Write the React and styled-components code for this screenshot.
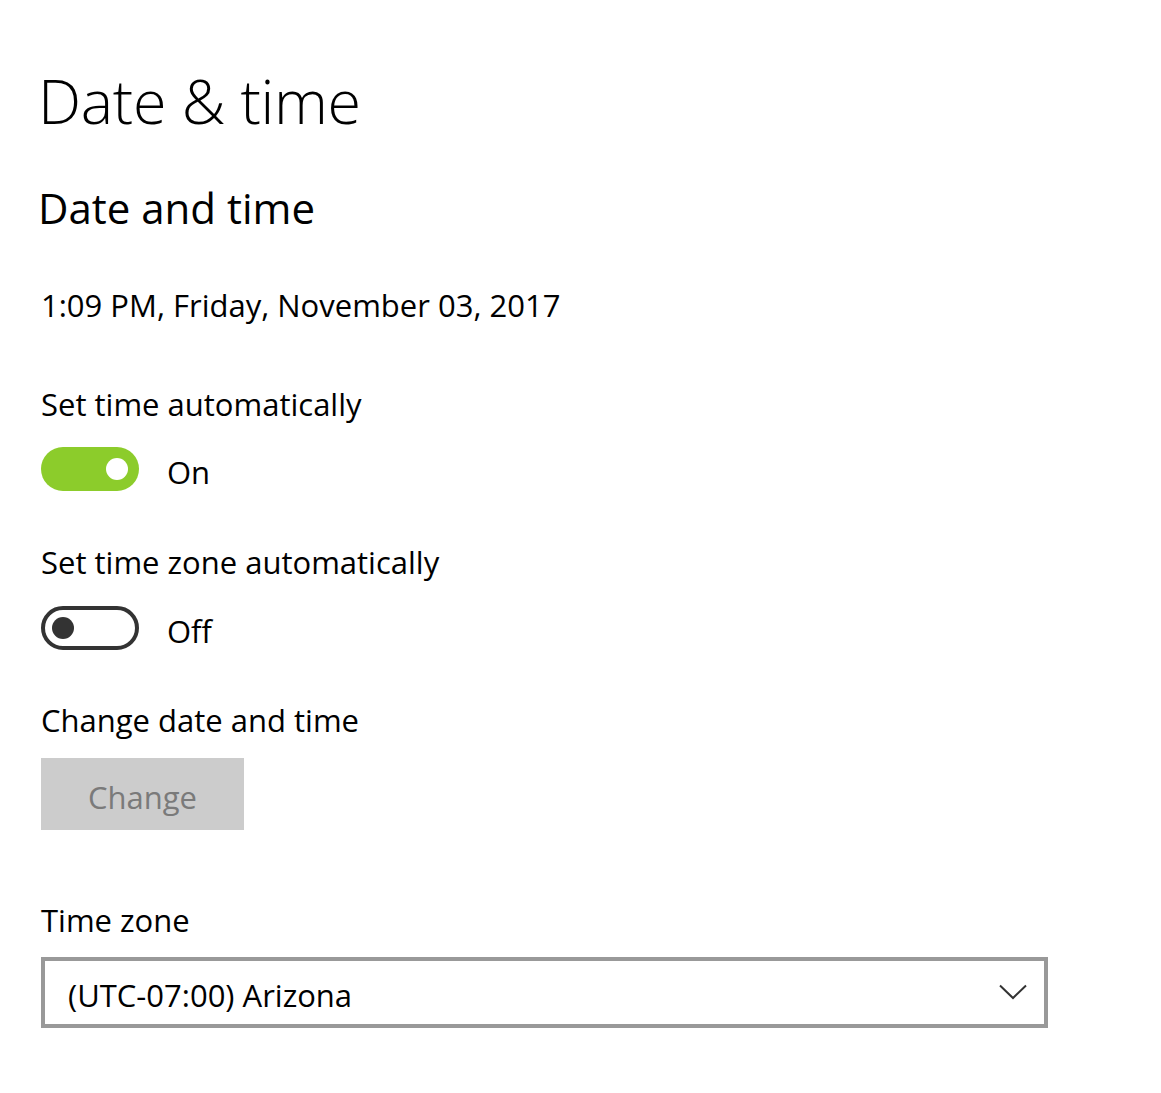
import React from "react";
import styled, { createGlobalStyle } from "styled-components";

const Global = createGlobalStyle`
  html, body { margin: 0; padding: 0; background: #ffffff; }
  body { font-family: "Open Sans", "Noto Sans", sans-serif; color: #000; }
`;

const Page = styled.div`
  width: 1161px;
  min-height: 1093px;
  padding: 61px 0 0 41px;
  box-sizing: border-box;
`;

const Title = styled.h1`
  margin: 0 0 0 -3px;
  font-size: 61px;
  font-weight: 300;
  line-height: 80px;
  letter-spacing: -0.3px;
`;

const SectionTitle = styled.h2`
  margin: 39px 0 0 -3px;
  font-size: 42px;
  font-weight: 400;
  line-height: 56px;
`;

const Text = styled.div`
  margin-top: ${(p) => p.$top || 0}px;
  font-size: 31px;
  line-height: 40px;
  color: ${(p) => p.$color || "#000"};
`;

const ToggleRow = styled.div`
  display: flex;
  align-items: flex-start;
  gap: 28px;
  height: 44px;
  margin-top: ${(p) => p.$top || 0}px;
`;

const Track = styled.div`
  width: 98px;
  height: 44px;
  flex: none;
  box-sizing: border-box;
  border-radius: 22px;
  background: ${(p) => (p.$on ? "#8ccc2b" : "transparent")};
  border: ${(p) => (p.$on ? "none" : "4px solid #333333")};
  display: flex;
  align-items: center;
  justify-content: ${(p) => (p.$on ? "flex-end" : "flex-start")};
  padding: 0 ${(p) => (p.$on ? 11 : 7)}px;
`;

const Knob = styled.div`
  width: 22px;
  height: 22px;
  border-radius: 50%;
  background: ${(p) => (p.$on ? "#ffffff" : "#333333")};
`;

const ToggleLabel = styled.span`
  font-size: 31px;
  line-height: 40px;
  margin-top: 5px;
`;

const Button = styled.button`
  display: block;
  margin-top: 18px;
  width: 203px;
  height: 72px;
  border: none;
  background: #cccccc;
  color: #7a7a7a;
  font-family: inherit;
  font-size: 31px;
  line-height: 40px;
  padding: 6px 0 0;
  cursor: default;
`;

const Select = styled.div`
  margin-top: 17px;
  width: 1007px;
  height: 71px;
  box-sizing: border-box;
  border: 4px solid #999999;
  display: flex;
  align-items: center;
  justify-content: space-between;
  padding: 4px 17px 0 23px;
`;

const SelectText = styled.span`
  font-size: 31px;
  line-height: 40px;
`;

const Chevron = () => (
  <svg width="28" height="16" viewBox="0 0 28 16" style={{ marginTop: -6 }}>
    <path d="M1 1.5 L14 14 L27 1.5" fill="none" stroke="#333" strokeWidth="2" />
  </svg>
);

const Toggle = ({ on }) => (
  <Track $on={on}>
    <Knob $on={on} />
  </Track>
);

export default function App() {
  return (
    <Page>
      <Global />
      <Title>Date &amp; time</Title>
      <SectionTitle>Date and time</SectionTitle>
      <Text $top={49}>1:09 PM, Friday, November 03, 2017</Text>
      <Text $top={59}>Set time automatically</Text>
      <ToggleRow $top={23}>
        <Toggle on />
        <ToggleLabel>On</ToggleLabel>
      </ToggleRow>
      <Text $top={51}>Set time zone automatically</Text>
      <ToggleRow $top={24}>
        <Toggle on={false} />
        <ToggleLabel>Off</ToggleLabel>
      </ToggleRow>
      <Text $top={50}>Change date and time</Text>
      <Button disabled>Change</Button>
      <Text $top={70}>Time zone</Text>
      <Select>
        <SelectText>(UTC-07:00) Arizona</SelectText>
        <Chevron />
      </Select>
    </Page>
  );
}
